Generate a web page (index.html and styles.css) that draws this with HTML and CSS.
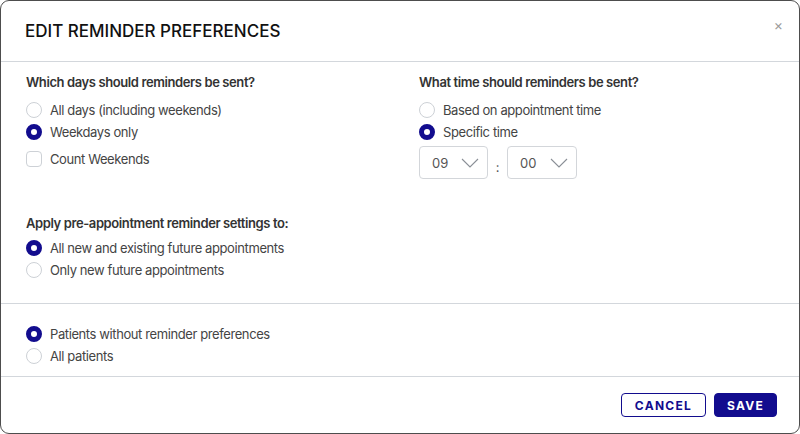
FILE: index.html
```html
<!DOCTYPE html>
<html>
<head>
<meta charset="utf-8">
<link rel="stylesheet" href="styles.css">
</head>
<body>
<div class="modal">
  <div class="header">
    <h1 class="title">EDIT REMINDER PREFERENCES</h1>
    <span class="close">&times;</span>
  </div>
  <div class="section first">
    <div class="cols">
      <div class="col">
        <div class="heading">Which days should reminders be sent?</div>
        <div class="row"><span class="radio"></span><span class="label">All days (including weekends)</span></div>
        <div class="row"><span class="radio on"></span><span class="label">Weekdays only</span></div>
        <div class="row check-row"><span class="checkbox"></span><span class="label">Count Weekends</span></div>
      </div>
      <div class="col">
        <div class="heading">What time should reminders be sent?</div>
        <div class="row"><span class="radio"></span><span class="label">Based on appointment time</span></div>
        <div class="row"><span class="radio on"></span><span class="label">Specific time</span></div>
        <div class="time">
          <div class="select"><span>09</span><svg width="18" height="10" viewBox="0 0 18 10"><path d="M1 1 L9 9 L17 1" fill="none" stroke="#8a8f96" stroke-width="1.1"/></svg></div>
          <span class="colon">:</span>
          <div class="select"><span>00</span><svg width="18" height="10" viewBox="0 0 18 10"><path d="M1 1 L9 9 L17 1" fill="none" stroke="#8a8f96" stroke-width="1.1"/></svg></div>
        </div>
      </div>
    </div>
    <div class="apply">
      <div class="heading">Apply pre-appointment reminder settings to:</div>
      <div class="row"><span class="radio on"></span><span class="label">All new and existing future appointments</span></div>
      <div class="row"><span class="radio"></span><span class="label">Only new future appointments</span></div>
    </div>
  </div>
  <div class="section second">
    <div class="row"><span class="radio on"></span><span class="label">Patients without reminder preferences</span></div>
    <div class="row"><span class="radio"></span><span class="label">All patients</span></div>
  </div>
  <div class="footer">
    <button class="btn outline">CANCEL</button>
    <button class="btn solid">SAVE</button>
  </div>
</div>
</body>
</html>
```

FILE: styles.css
```css
html, body {
  margin: 0;
  padding: 0;
  background: #ffffff;
}
body {
  font-family: Inter, "Noto Sans", sans-serif;
  color: #3d3d3d;
}
.modal {
  width: 800px;
  height: 434px;
  box-sizing: border-box;
  border: 1px solid #4d4d4d;
  border-radius: 9px;
  display: flex;
  flex-direction: column;
  background: #fff;
}
.header {
  height: 60px;
  border-bottom: 1px solid #d3d7dc;
  display: flex;
  align-items: center;
  justify-content: space-between;
  padding: 0 16px 0 24px;
}
.title {
  margin: 0;
  font-size: 17px;
  font-weight: 500;
  color: #111;
  letter-spacing: 0;
}
.close {
  align-self: flex-start;
  margin-top: 15px;
  font-size: 14px;
  color: #9a9a9a;
  line-height: 18px;
}
.section {
  padding: 0 25px;
}
.first {
  padding-top: 11px;
  padding-bottom: 22px;
  border-bottom: 1px solid #d3d7dc;
}
.cols {
  display: grid;
  grid-template-columns: 393px 1fr;
}
.heading {
  font-size: 13px;
  font-weight: 600;
  line-height: 18px;
  color: #333;
  margin-bottom: 8px;
  letter-spacing: -0.4px;
}
.row {
  display: flex;
  align-items: center;
  height: 22px;
  gap: 8px;
}
.label {
  font-size: 13px;
  color: #444;
  letter-spacing: -0.4px;
}
.radio {
  width: 16px;
  height: 16px;
  box-sizing: border-box;
  border: 1px solid #cdd1d6;
  border-radius: 50%;
  background: #fff;
  flex: none;
}
.radio.on {
  border: 5px solid #120c8e;
  background: #fff;
}
.checkbox {
  width: 16px;
  height: 16px;
  box-sizing: border-box;
  border: 1px solid #cdd1d6;
  border-radius: 4px;
  flex: none;
}
.check-row {
  margin-top: 5px;
}
.time {
  display: flex;
  align-items: center;
  margin-top: 3px;
  gap: 0;
}
.select {
  width: 70px;
  height: 33px;
  box-sizing: border-box;
  border: 1px solid #d3d6da;
  border-radius: 4px;
  display: flex;
  align-items: center;
  justify-content: space-between;
  padding: 0 8px 0 12px;
  font-size: 13px;
  color: #555;
}
.select:first-child {
  width: 69px;
}
.colon {
  width: 19px;
  text-align: center;
  font-size: 13px;
  color: #555;
  padding-top: 8px;
}
.apply {
  margin-top: 35px;
}
.apply .heading {
  margin-bottom: 5px;
}
.second {
  padding-top: 19px;
  padding-bottom: 9px;
  border-bottom: 1px solid #d3d7dc;
}
.footer {
  flex: 1;
  display: flex;
  justify-content: flex-end;
  align-items: center;
  gap: 8px;
  padding: 0 22px 0 0;
}
.btn {
  height: 24px;
  box-sizing: border-box;
  border-radius: 4px;
  font-family: Inter, "Noto Sans", sans-serif;
  font-size: 12px;
  font-weight: 700;
  letter-spacing: 1.3px;
  padding: 0 12px;
  cursor: pointer;
}
.outline {
  width: 85px;
  background: #fff;
  color: #120c8e;
  border: 1px solid #120c8e;
}
.solid {
  width: 63px;
  background: #120c8e;
  color: #fff;
  border: 1px solid #120c8e;
}
```
